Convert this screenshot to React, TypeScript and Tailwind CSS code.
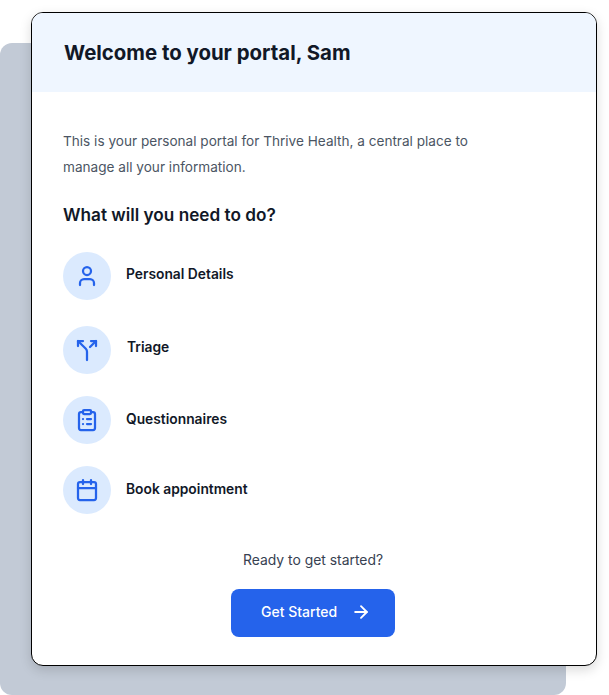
import React from 'react';
import { ArrowRight, Calendar, ClipboardList, Split, User } from 'lucide-react';

const steps = [
  { label: 'Personal Details', icon: User, row: 'mb-[26px]', text: 'ml-[15px] -mt-1' },
  { label: 'Triage', icon: Split, row: 'mb-[22px]', text: 'ml-4 -mt-1.5' },
  { label: 'Questionnaires', icon: ClipboardList, row: 'mb-[22px]', text: 'ml-[15px] -mt-0.5' },
  { label: 'Book appointment', icon: Calendar, row: '', text: 'ml-[15px] -mt-0.5' },
];

export default function App() {
  return (
    <div className="relative h-[695px] w-[609px] overflow-hidden bg-white font-['Inter',sans-serif]">
      {/* offset panel behind the card */}
      <div className="absolute left-0 top-[43px] h-[652px] w-[566px] rounded-xl bg-[#c2cad6]" />

      <div className="relative ml-[31px] mt-3 flex h-[654px] w-[566px] flex-col overflow-hidden rounded-xl border border-black bg-white shadow-[0_4px_12px_rgba(0,0,0,0.15)]">
        <div className="flex h-[79px] items-center bg-[#eff6ff] px-8 pt-0.5">
          <h1 className="text-[20.4px] font-bold text-[#111827]">Welcome to your portal, Sam</h1>
        </div>

        <div className="flex flex-1 flex-col pl-[31px] pr-[33px] pt-9">
          <p className="w-[420px] text-[13.6px] leading-[26px] text-[#4b5563]">
            This is your personal portal for Thrive Health, a central place to manage all your information.
          </p>
          <h2 className="mt-[21px] text-[17.2px] font-semibold leading-7 text-[#111827]">What will you need to do?</h2>

          <div className="mt-[23px]">
            {steps.map(({ label, icon: Icon, row, text }) => (
              <div key={label} className={`flex items-center ${row}`}>
                <div className="flex h-12 w-12 items-center justify-center rounded-full bg-[#dbeafe]">
                  <Icon size={24} strokeWidth={2.25} className="text-[#2563eb]" />
                </div>
                <span className={`text-[13.8px] font-semibold text-[#111827] ${text}`}>{label}</span>
              </div>
            ))}
          </div>

          <p className="mt-[36px] text-center text-[13.9px] leading-5 text-[#374151]">Ready to get started?</p>
          <button className="mx-auto mt-[19px] flex h-12 w-[164px] items-center gap-3.5 rounded-lg bg-[#2563eb] pb-0.5 pl-[30px] text-sm font-medium text-white">
            Get Started
            <ArrowRight size={20} strokeWidth={2.25} />
          </button>
        </div>
      </div>
    </div>
  );
}
